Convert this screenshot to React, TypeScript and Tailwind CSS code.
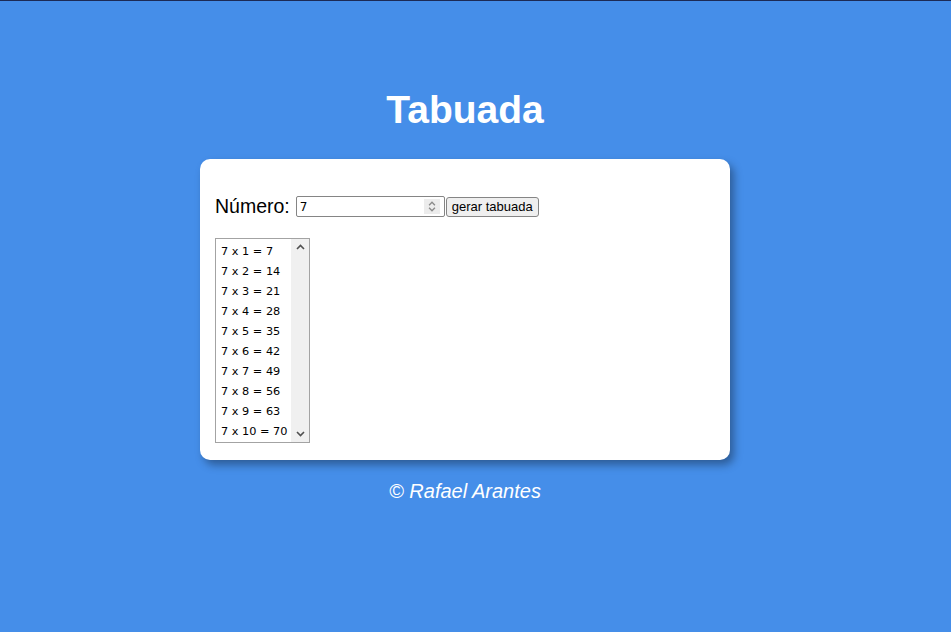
import React from 'react';

const numero = 7;
const linhas = Array.from({ length: 10 }, (_, i) => `${numero} x ${i + 1} = ${numero * (i + 1)}`);

function Chevron({ up, className }: { up?: boolean; className?: string }) {
  return (
    <svg width="9" height="6" viewBox="0 0 9 6" className={className}>
      <path
        d={up ? 'M1 5 L4.5 1.5 L8 5' : 'M1 1 L4.5 4.5 L8 1'}
        fill="none"
        stroke="currentColor"
        strokeWidth="1.6"
      />
    </svg>
  );
}

export default function App() {
  return (
    <div className="min-h-[632px] bg-[#458ee9] border-t border-[#1c2a55] font-['Liberation_Sans',Arial,sans-serif]">
      <div className="flex flex-col items-center pr-[21px]">
        <h1 className="mt-[87px] text-[39px] leading-[44px] font-bold text-white">Tabuada</h1>

        <div className="mt-[27px] w-[530px] h-[301px] bg-white rounded-[10px] shadow-[4px_5px_8px_rgba(0,0,0,0.35)] px-[15px] pt-[37px]">
          <div className="flex items-center h-[21px]">
            <span className="text-[19.5px] text-black mr-[6px]">Número:</span>
            <div className="relative w-[149px] h-[21px] border border-[#858585] rounded-[2px] flex items-center pl-[3px] text-[12px] text-black font-['DejaVu_Sans',sans-serif]">
              7
              <div className="absolute right-[4px] top-[2px] w-[16px] h-[15px] bg-[#ececec] flex flex-col items-center justify-center gap-[1px] text-[#8a8a8a]">
                <Chevron up className="w-[8px] h-[5px]" />
                <Chevron className="w-[8px] h-[5px]" />
              </div>
            </div>
            <button className="ml-[1px] h-[20px] w-[93px] border border-[#858585] rounded-[3px] bg-[#efefef] text-[13px] text-black leading-none">
              gerar tabuada
            </button>
          </div>

          <div className="mt-[21px] w-[95px] h-[205px] border border-[#a3a3a3] flex">
            <div className="flex-1 pt-[3px] pl-[5px] font-['DejaVu_Sans',sans-serif] text-[11.3px] text-black">
              {linhas.map((l) => (
                <div key={l} className="h-[20px] leading-[20px] whitespace-nowrap">
                  {l}
                </div>
              ))}
            </div>
            <div className="w-[18px] bg-[#f0f0f0] flex flex-col justify-between items-center py-[5px] text-[#505050]">
              <Chevron up />
              <Chevron />
            </div>
          </div>
        </div>

        <p className="mt-[16px] text-[20px] italic text-white">© Rafael Arantes</p>
      </div>
    </div>
  );
}
